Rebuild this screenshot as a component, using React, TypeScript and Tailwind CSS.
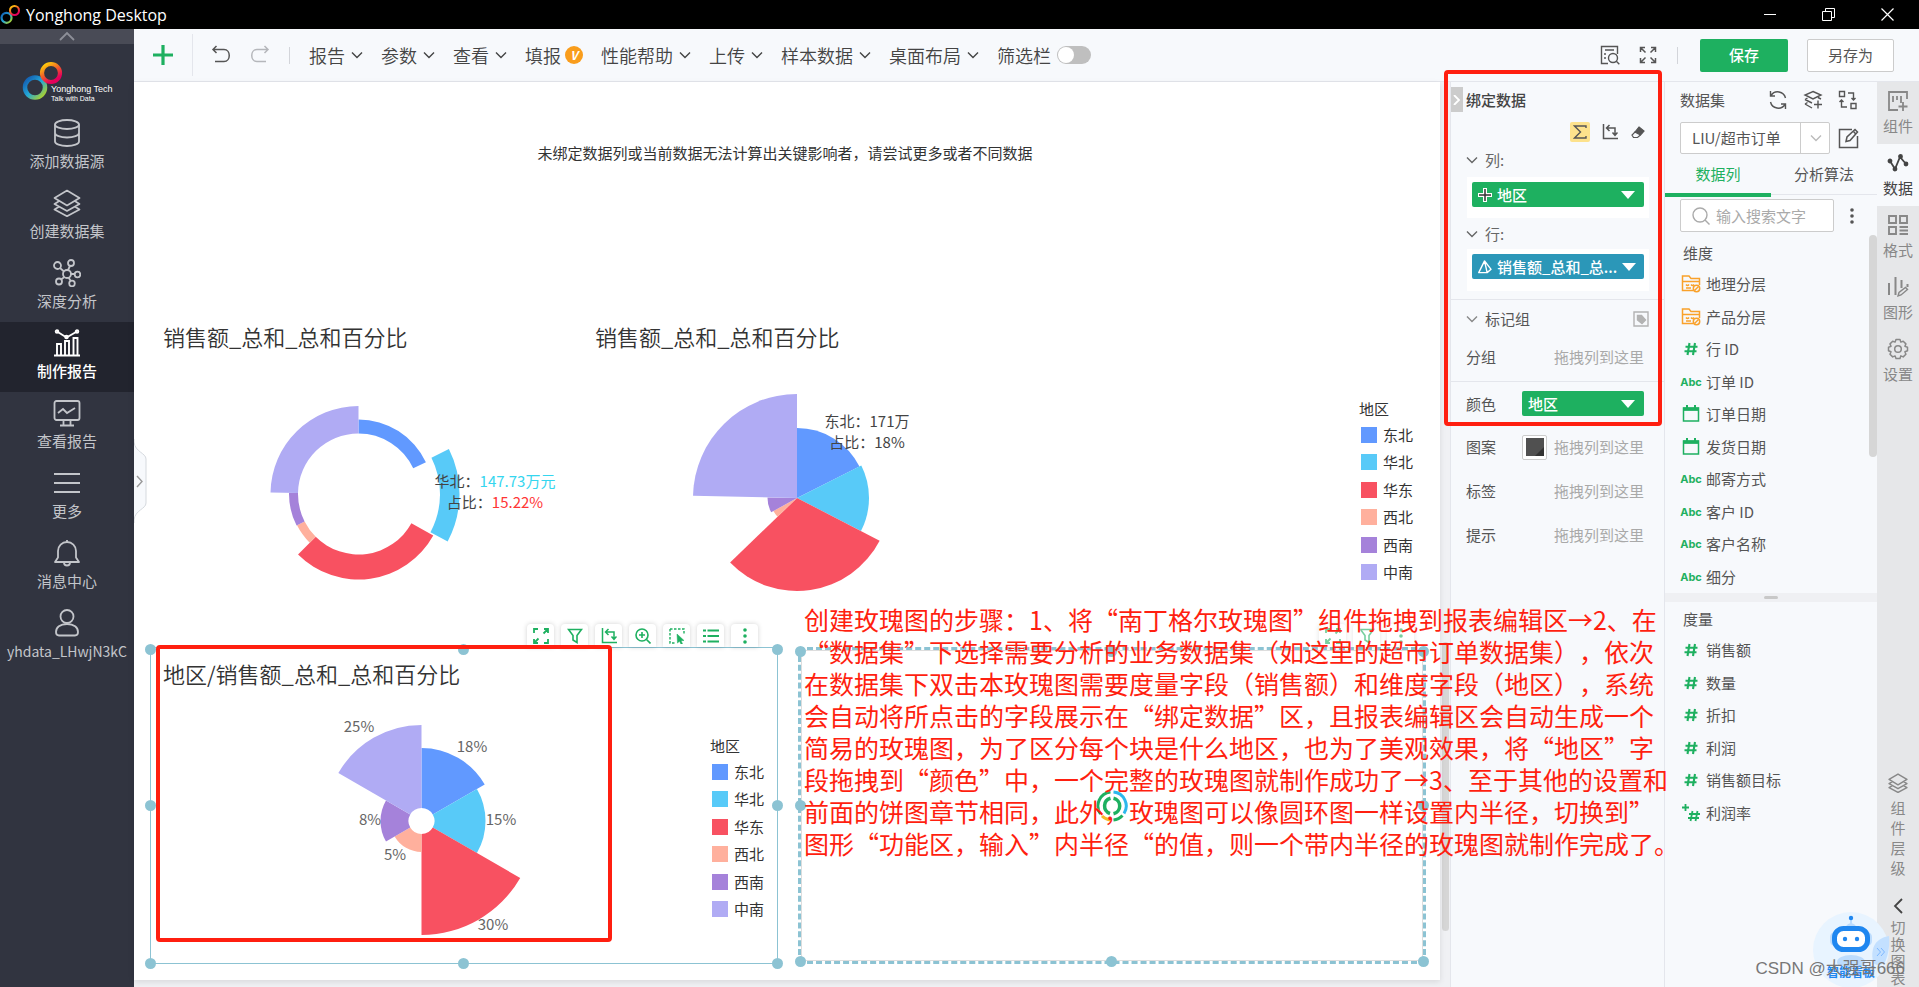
import type { ReactNode } from "react";
import clsx from "clsx";

type Slice = { from: number; to: number; inner: number; outer: number; color: string };

const COLORS = {
  dongbei: "#6199ff",
  huabei: "#58caf8",
  huadong: "#f85161",
  xibei: "#ffb09d",
  xinan: "#a582da",
  zhongnan: "#b0abf4",
};

const REGIONS = [
  { name: "东北", color: COLORS.dongbei },
  { name: "华北", color: COLORS.huabei },
  { name: "华东", color: COLORS.huadong },
  { name: "西北", color: COLORS.xibei },
  { name: "西南", color: COLORS.xinan },
  { name: "中南", color: COLORS.zhongnan },
];

const STEPS = [
  "创建玫瑰图的步骤：1、将“南丁格尔玫瑰图”组件拖拽到报表编辑区→2、在",
  "“数据集”下选择需要分析的业务数据集（如这里的超市订单数据集），依次",
  "在数据集下双击本玫瑰图需要度量字段（销售额）和维度字段（地区），系统",
  "会自动将所点击的字段展示在“绑定数据”区，且报表编辑区会自动生成一个",
  "简易的玫瑰图，为了区分每个块是什么地区，也为了美观效果，将“地区”字",
  "段拖拽到“颜色”中，一个完整的玫瑰图就制作成功了→3、至于其他的设置和",
  "前面的饼图章节相同，此外，玫瑰图可以像圆环图一样设置内半径，切换到”",
  "图形“功能区，输入”内半径“的值，则一个带内半径的玫瑰图就制作完成了。",
];

// --- icons ---

function Icon({ size = 20, box = 20, sw = 1.4, className, children }: { size?: number; box?: number; sw?: number; className?: string; children: ReactNode }) {
  return (
    <svg width={size} height={size} viewBox={`0 0 ${box} ${box}`} fill="none" stroke="currentColor" strokeWidth={sw} className={clsx("shrink-0", className)} aria-hidden="true">
      {children}
    </svg>
  );
}

const Chevron = ({ className }: { className?: string }) => (
  <Icon size={12} box={12} className={className}><path d="M1 3.500 6 8.500 11 3.500" /></Icon>
);

const Caret = () => (
  <svg width="14" height="8" viewBox="0 0 14 8" className="shrink-0" aria-hidden="true"><path d="M0 0h14L7 8z" fill="#fff" /></svg>
);

// four arrows pointing at the corners, not joined in the middle
const ExpandIcon = () => (
  <Icon size={18} box={18} sw={1.5}>
    <path d="M1.500 6V1.500H6M1.500 1.500l5 5M12 1.500h4.500V6M16.500 1.500l-5 5M1.500 12v4.500H6M1.500 16.500l5-5M16.500 12v4.500H12M16.500 16.500l-5-5" />
  </Icon>
);

const FullIcon = () => (
  <Icon size={16} box={16} sw={1.8}>
    <path d="M1 5V1h4M11 1h4v4M15 1l-4.500 4.500M1 11v4h4M1 15l4.500-4.500M15 11v4h-4" />
  </Icon>
);

const FilterIcon = () => (
  <Icon size={16} box={16} sw={1.6}><path d="M1.500 1.500h13L10 7.500V14.500L6 12V7.500z" /></Icon>
);

const AxisIcon = () => (
  <Icon size={16} box={16} sw={1.5}><path d="M1.500 0v14.500H16M4.500 4h8.500v7M7.500 1 4.500 4l3 3M10.500 8.500 13 11.300l2.500-2.800" /></Icon>
);

const DotsIcon = () => (
  <svg width="16" height="16" viewBox="0 0 16 16" fill="currentColor" aria-hidden="true">
    <circle cx="8" cy="2" r="1.800" /><circle cx="8" cy="8" r="1.800" /><circle cx="8" cy="14" r="1.800" />
  </svg>
);

const LayersIcon = ({ size = 28 }: { size?: number }) => (
  <Icon size={size} box={28} sw={size > 24 ? 1.7 : 2}>
    <path d="M14 1.500 26.500 9 14 16.500 1.500 9zM5.500 12.500l-4 2.500L14 22l12.500-7-4-2.500M5.500 18l-4 2.500L14 27.200l12.500-6.700-4-2.500" strokeLinejoin="round" />
  </Icon>
);

const NAV = [
  { label: "添加数据源", icon: <Icon size={28} box={28} sw={1.8}><ellipse cx="14" cy="5.500" rx="12" ry="4.500" /><path d="M2 5.500v17c0 2.500 5.400 4.500 12 4.500s12-2 12-4.500v-17M2 14c0 2.500 5.400 4.500 12 4.500s12-2 12-4.500" /></Icon> },
  { label: "创建数据集", icon: <LayersIcon /> },
  { label: "深度分析", icon: <Icon size={28} box={28} sw={1.8}><circle cx="14" cy="15" r="4" /><circle cx="4.500" cy="6.500" r="3.500" /><circle cx="18" cy="4" r="3" /><circle cx="24.500" cy="15.500" r="2.800" /><circle cx="6" cy="22.500" r="3" /><circle cx="19" cy="24.500" r="2.800" /><path d="m7 9 4 3.500M17 7l-2 4M18 15h3.700M11.500 18 8 20.500M15.500 18.500l2.300 3.500" /></Icon> },
  { label: "制作报告", active: true, icon: <Icon size={28} box={28} sw={1.9}><path d="M1 26.500h26M4 26V15h4v11M12 26V12h4v14M20.500 26V9h4v17M4 2.500l9.500 6L24 2.500" /><circle cx="4" cy="2.500" r="1.300" /><circle cx="13.500" cy="8" r="1.300" /><circle cx="24" cy="2.500" r="1.300" /></Icon> },
  { label: "查看报告", icon: <Icon size={28} box={28} sw={1.8}><rect x="1.500" y="2" width="25" height="19" rx="2" /><path d="m5 14 5-4 4 4 8-5M10.500 21v5M17.500 21v5M7 26.500h14" /></Icon> },
  { label: "更多", icon: <Icon size={28} box={28} sw={1.8}><path d="M1 5h26M1 14h26M1 23h26" /></Icon> },
  { label: "消息中心", icon: <Icon size={28} box={28} sw={1.8}><path d="M2 23h24l-3-4.500V12c0-5-4-9-9-9s-9 4-9 9v6.500zM14 3V1M11 23.500c0 4 6 4 6 0" strokeLinejoin="round" /></Icon> },
  { label: "yhdata_LHwjN3kC", small: true, icon: <Icon size={28} box={28} sw={1.8}><ellipse cx="14" cy="7.500" rx="6.500" ry="6.500" /><path d="M6 26.500h16c2 0 3-1.500 3-3.500 0-4.500-4-8-11-8S3 18.500 3 23c0 2 1 3.500 3 3.500z" /></Icon> },
];

const TABS = [
  { label: "组件", icon: <Icon size={22} box={22} sw={1.8}><path d="M20 9V2H2v18h9M6 6v6M10 6v4M14 6v7M16 12v9M11.500 16.500h9" /></Icon> },
  { label: "数据", active: true, icon: <Icon size={22} box={22} sw={1.8}><path d="m3 9 5 8 5-12 6 7" /><g fill="currentColor"><circle cx="3" cy="9" r="1.500" /><circle cx="8" cy="17" r="1.500" /><circle cx="13.500" cy="4.500" r="1.500" /><circle cx="19" cy="12" r="1.500" /></g></Icon> },
  { label: "格式", icon: <Icon size={22} box={22} sw={1.9}><path d="M2 2h7v7H2zM13 2h7v7h-7zM2 13h7v7H2zM12.500 13H21M12.500 16.500H21M12.500 20H21" /></Icon> },
  { label: "图形", icon: <Icon size={22} box={22} sw={2}><path d="M2 7v12M8.500 1v18M14.500 4v8M20.500 8v3" /><path d="m11 20 1-3.500 6.500-5 2 2-6.500 5.500z" strokeWidth="1.400" /></Icon> },
  { label: "设置", icon: <Icon size={22} box={22} sw={1.5}><circle cx="11" cy="11" r="3.300" /><path d="m9 1.500h4l.8 2.600 2.400-.9 2.700 2.700-1 2.500 2.600.9v3.400l-2.600 1 1 2.500-2.700 2.700-2.400-1-.8 2.600H9l-.9-2.600-2.400 1L3 16.200l1-2.500-2.500-1V9.300L4 8.400 3 5.900l2.700-2.700 2.400.9z" strokeLinejoin="round" /></Icon> },
];

const MENUS = [
  { label: "报告" },
  { label: "参数" },
  { label: "查看" },
  { label: "填报", vip: true },
  { label: "性能帮助" },
  { label: "上传" },
  { label: "样本数据" },
  { label: "桌面布局" },
];

const DIMENSIONS = [
  { kind: "folder", label: "地理分层" },
  { kind: "folder", label: "产品分层" },
  { kind: "number", label: "行 ID" },
  { kind: "text", label: "订单 ID" },
  { kind: "date", label: "订单日期" },
  { kind: "date", label: "发货日期" },
  { kind: "text", label: "邮寄方式" },
  { kind: "text", label: "客户 ID" },
  { kind: "text", label: "客户名称" },
  { kind: "text", label: "细分" },
];

const MEASURES = [
  { kind: "number", label: "销售额" },
  { kind: "number", label: "数量" },
  { kind: "number", label: "折扣" },
  { kind: "number", label: "利润" },
  { kind: "number", label: "销售额目标" },
  { kind: "calc", label: "利润率" },
];

function FieldIcon({ kind }: { kind: string }) {
  switch (kind) {
    case "folder":
      return (
        <Icon size={20} box={20} sw={1.5} className="text-[#f9a12a]">
          <path d="M12 16.500H1.500V2H8l2 2.500h8.500V11M1.500 7.500h17M5 10.500c1 1.300 2 1.300 3 0M10 10.500c1 1.300 2 1.300 3 0M5 14h5" />
          <circle cx="15.500" cy="14.500" r="3.200" /><path d="m13.500 16.500 4-4" />
        </Icon>
      );
    case "date":
      return (
        <Icon size={18} box={18} sw={1.5} className="text-[#1eb060]">
          <path d="M1.500 3h15v13h-15zM1.500 5h15" /><path d="M1 4h16" strokeWidth="3" /><path d="M5 0v3M13 0v3" strokeWidth="2" />
        </Icon>
      );
    case "text":
      return <span className="text-[11px] font-bold text-[#1eb060] [font-family:Inter,sans-serif]">Abc</span>;
    case "calc":
      return (
        <Icon size={18} box={18} sw={1.8} className="text-[#1eb060]">
          <path d="M3.500 0v7M0 3.500h7M10.500 7 8.500 17M15.500 7l-2 10M7 10h11M6 14h11" />
        </Icon>
      );
    default:
      return (
        <Icon size={14} box={14} sw={2.1} className="text-[#1eb060]">
          <path d="M5.500 1 3.500 13M11 1 9 13M1.500 4.700h12M.5 9.300h12" />
        </Icon>
      );
  }
}

// --- charts ---

function arcPath(cx: number, cy: number, { from, to, inner, outer }: Slice) {
  const pt = (r: number, deg: number) => {
    const a = (deg * Math.PI) / 180;
    return `${(cx + r * Math.sin(a)).toFixed(2)} ${(cy - r * Math.cos(a)).toFixed(2)}`;
  };
  const large = to - from > 180 ? 1 : 0;
  return `M${pt(inner, from)}L${pt(outer, from)}A${outer} ${outer} 0 ${large} 1 ${pt(outer, to)}L${pt(inner, to)}A${inner} ${inner} 0 ${large} 0 ${pt(inner, from)}Z`;
}

function RoseChart({ cx, cy, slices, children }: { cx: number; cy: number; slices: Slice[]; children?: ReactNode }) {
  return (
    <svg width="420" height="248" className="block" role="img" aria-label="玫瑰图">
      {slices.map((s) => <path key={s.color} d={arcPath(cx, cy, s)} fill={s.color} />)}
      <g fontSize="15" textAnchor="middle">{children}</g>
    </svg>
  );
}

const RING: Slice[] = [
  { from: 0, to: 64.8, inner: 60.5, outer: 74.5, color: COLORS.dongbei },
  { from: 63.5, to: 118, inner: 81.5, outer: 101, color: COLORS.huabei },
  { from: 119, to: 225, inner: 60.5, outer: 85.5, color: COLORS.huadong },
  { from: 225, to: 243, inner: 60.5, outer: 69, color: COLORS.xibei },
  { from: 243, to: 271, inner: 60.5, outer: 69.5, color: COLORS.xinan },
  { from: 271, to: 360, inner: 60.5, outer: 88, color: COLORS.zhongnan },
];

const PIE: Slice[] = [
  { from: 0, to: 63.2, inner: 0, outer: 70, color: COLORS.dongbei },
  { from: 63.2, to: 117.3, inner: 0, outer: 72, color: COLORS.huabei },
  { from: 117.3, to: 226, inner: 0, outer: 93, color: COLORS.huadong },
  { from: 226, to: 241, inner: 0, outer: 27, color: COLORS.xibei },
  { from: 241, to: 271.2, inner: 0, outer: 29.5, color: COLORS.xinan },
  { from: 271.2, to: 360, inner: 0, outer: 104, color: COLORS.zhongnan },
];

const ROSE: Slice[] = [
  { from: 0, to: 60, inner: 13, outer: 73, color: COLORS.dongbei },
  { from: 60, to: 120, inner: 13, outer: 64, color: COLORS.huabei },
  { from: 120, to: 180, inner: 13, outer: 114, color: COLORS.huadong },
  { from: 180, to: 240, inner: 13, outer: 31, color: COLORS.xibei },
  { from: 240, to: 300, inner: 13, outer: 41, color: COLORS.xinan },
  { from: 300, to: 360, inner: 13, outer: 96, color: COLORS.zhongnan },
];

function Legend() {
  return (
    <div className="w-[67px] shrink-0 text-[15px] leading-6 text-[#333]">
      <div>地区</div>
      <ul className="grid h-[165px] auto-rows-fr">
        {REGIONS.map((r) => (
          <li key={r.name} className="flex items-center gap-[6px] pl-[2px]">
            <span className="size-4" style={{ backgroundColor: r.color }} />
            {r.name}
          </li>
        ))}
      </ul>
    </div>
  );
}

function Handles() {
  const dot = "absolute size-[11px] rounded-full bg-[#8cc3d3]";
  return (
    <>
      <i className={`${dot} -left-[6px] -top-[4px]`} />
      <i className={`${dot} left-1/2 -ml-[6px] -top-[4px]`} />
      <i className={`${dot} -right-[6px] -top-[4px]`} />
      <i className={`${dot} -left-[6px] top-1/2 -mt-[6px]`} />
      <i className={`${dot} -right-[6px] top-1/2 -mt-[6px]`} />
      <i className={`${dot} -bottom-[6px] -left-[6px]`} />
      <i className={`${dot} -bottom-[6px] left-1/2 -ml-[6px]`} />
      <i className={`${dot} -bottom-[6px] -right-[6px]`} />
    </>
  );
}

function FloatButton({ label, children }: { label: string; children: ReactNode }) {
  return (
    <button aria-label={label} className="flex h-[23px] w-[27px] items-center justify-center rounded-t-[4px] bg-white text-[#1eb060] shadow-[0_0_5px_rgba(0,0,0,0.18)]">
      {children}
    </button>
  );
}

function Spinner() {
  return (
    <svg width="32" height="32" viewBox="0 0 32 32" fill="none" strokeWidth="3" aria-label="加载中">
      <circle cx="16" cy="16" r="15.500" fill="#fff" />
      <path d="M17.500 2A14 14 0 0 1 28 23.500" stroke="#2cb8ec" />
      <path d="M26.500 25.500A14 14 0 0 1 17.500 30" stroke="#1eb060" />
      <path d="M14.500 30A14 14 0 0 1 6 26" stroke="#f7ba2a" />
      <path d="M4.500 24A14 14 0 0 1 14.500 2" stroke="#1eb060" />
      <path d="M17.500 8.200a8 8 0 0 1 0 15.600M14 23.500a8 8 0 0 1 .5-15.300" stroke="#1eb060" strokeWidth="3.500" />
    </svg>
  );
}

// --- shell ---

function Rings({ className }: { className?: string }) {
  return (
    <svg viewBox="0 0 42 40" className={className} fill="none" aria-hidden="true">
      <defs>
        <linearGradient id="cool" x1="0" y1="0" x2="1" y2="1">
          <stop offset="0.100" stopColor="#1565b5" /><stop offset="0.500" stopColor="#23a7d8" /><stop offset="0.900" stopColor="#a2cf3a" />
        </linearGradient>
        <linearGradient id="warm" x1="0" y1="0" x2="0.600" y2="1">
          <stop offset="0.100" stopColor="#fdc70c" /><stop offset="0.550" stopColor="#f1592a" /><stop offset="0.950" stopColor="#e5005b" />
        </linearGradient>
      </defs>
      <circle cx="13" cy="26.500" r="10" stroke="url(#cool)" strokeWidth="4.500" />
      <circle cx="29" cy="12" r="9" stroke="url(#warm)" strokeWidth="4.200" />
    </svg>
  );
}

function TitleBar() {
  return (
    <header className="flex h-[29px] shrink-0 items-center justify-between bg-black text-white">
      <div className="flex items-center gap-[5px]">
        <Rings className="h-[21px] w-[21px]" />
        <span className="text-base leading-6 [font-family:'Open_Sans',sans-serif]">Yonghong Desktop</span>
      </div>
      <div className="flex items-center gap-[46px] pr-[25px]">
        <button aria-label="最小化"><Icon size={12} box={12} sw={1}><path d="M0 5.500h12" /></Icon></button>
        <button aria-label="还原"><Icon size={13} box={13} sw={1}><path d="M.5 3.500h9v9h-9zM3.500 3.500v-3h9v9h-3" /></Icon></button>
        <button aria-label="关闭"><Icon size={13} box={13} sw={1.2}><path d="m.5.5 12 12M12.500.5l-12 12" /></Icon></button>
      </div>
    </header>
  );
}

function Sidebar() {
  return (
    <aside className="flex w-[134px] shrink-0 flex-col bg-[#313440] text-[#c3c5ca]">
      <button aria-label="收起" className="flex h-[15px] items-center justify-center bg-[#494b56] text-[#8d8f98]">
        <Icon size={16} box={16} sw={1.8}><path d="m1 11 7-7 7 7" /></Icon>
      </button>
      <div className="flex h-[68px] items-start pl-[22px] pt-[17px]">
        <Rings className="h-10 w-[42px] shrink-0" />
        <div className="-ml-[13px] mt-[23px] whitespace-nowrap text-white [font-family:'Liberation_Sans',sans-serif]">
          <p className="text-[9px] leading-[11px]">Yonghong Tech</p>
          <p className="text-[7px] leading-[8px]">Talk with Data</p>
        </div>
      </div>
      <nav>
        {NAV.map((n) => (
          <a
            key={n.label}
            href="#"
            className={clsx("flex h-[70px] flex-col items-center gap-1 pt-[7px] leading-5", n.small ? "text-sm" : "text-[15px]", n.active && "bg-[#22242e] font-medium text-white")}
          >
            {n.icon}
            {n.label}
          </a>
        ))}
      </nav>
    </aside>
  );
}

function Toolbar() {
  return (
    <div className="flex h-[53px] shrink-0 items-center border-b border-[#e4e6ec] bg-[#f7f9fc] text-lg text-[#555]">
      <button aria-label="新建" className="flex h-[42px] w-[59px] items-center justify-center border-r border-[#e4e6ec] text-[#1eb060]">
        <Icon size={20} box={20} sw={3.2}><path d="M10 0v20M0 10h20" /></Icon>
      </button>
      <button aria-label="撤销" className="ml-[18px]"><Icon sw={1.5}><path d="M5.500 1 2 4.500 5.500 8M2 4.500h11c7 0 7 12 0 12H4" /></Icon></button>
      <button aria-label="重做" className="ml-[19px] text-[#b5b7bb]"><Icon sw={1.5}><path d="M14.500 1 18 4.500 14.500 8M18 4.500H7c-7 0-7 12 0 12h9" /></Icon></button>
      <span className="ml-[19px] h-[17px] w-px bg-[#d3d5da]" />
      <nav className="ml-[19px] flex items-center gap-[18px] whitespace-nowrap font-[350] text-[#444]">
        {MENUS.map((m) => (
          <button key={m.label} className="flex items-center gap-[6px]">
            {m.label}
            {m.vip ? (
              <span className="-ml-[2px] flex size-[18px] items-center justify-center rounded-full bg-[#f99d1c] text-xs font-bold italic text-white">V</span>
            ) : (
              <Chevron />
            )}
          </button>
        ))}
        <label className="flex items-center gap-[6px]">
          筛选栏
          <input type="checkbox" role="switch" className="h-[18px] w-[34px] appearance-none rounded-full bg-[#bfbfbf] p-px before:block before:size-4 before:rounded-full before:bg-white" />
        </label>
      </nav>
      <div className="ml-auto flex items-center pr-[25px] text-[15px]">
        <button aria-label="预览"><Icon><path d="M8 18.500H1.500v-17h16V9M5 5h9M4 9h2M4 13h2" /><circle cx="13" cy="13" r="4.500" /><path d="m16.300 16.300 3 3" /></Icon></button>
        <button aria-label="全屏" className="ml-[19px]"><ExpandIcon /></button>
        <span className="ml-5 h-[17px] w-px bg-[#d3d5da]" />
        <button className="ml-[22px] h-[33px] w-[88px] rounded-[2px] bg-[#1eb060] font-medium text-white">保存</button>
        <button className="ml-[19px] h-[33px] w-[87px] rounded-[2px] border border-[#ccc] bg-white">另存为</button>
      </div>
    </div>
  );
}

function Report() {
  const title = "text-[22px] font-[350] leading-[38px] text-[#333]";
  return (
    <div className="relative flex min-w-0 flex-1 flex-col bg-[#f0f1f4]">
      <div className="h-[898px] bg-white pt-[59px] shadow-[0_2px_6px_rgba(0,0,0,0.1)]">
        <p className="pr-1 text-center text-[15px] leading-6 text-[#333]">未绑定数据列或当前数据无法计算出关键影响者，请尝试更多或者不同数据</p>

        <div className="mt-[152px] flex h-[308px] pl-[29px] pr-[14px]">
          <section className="w-[432px] shrink-0">
            <h2 className={`${title} mb-[6px]`}>销售额_总和_总和百分比</h2>
            <RoseChart cx={195.5} cy={133} slices={RING}>
              <text x="332" y="126" fill="#444">华北：<tspan fill="#35d6ef">147.73万元</tspan></text>
              <text x="332" y="147" fill="#444">占比：<tspan fill="#ff3535">15.22%</tspan></text>
            </RoseChart>
          </section>
          <section className="flex flex-1 justify-between">
            <div>
              <h2 className={`${title} mb-[6px]`}>销售额_总和_总和百分比</h2>
              <RoseChart cx={202} cy={137} slices={PIE}>
                <text x="272" y="66" fill="#444">东北：171万</text>
                <text x="272" y="87" fill="#444">占比：18%</text>
              </RoseChart>
            </div>
            <div className="pt-[80px]"><Legend /></div>
          </section>
        </div>

        <div className="mt-[22px] grid h-[317px] grid-cols-2 gap-5 pl-4 pr-[14px]">
          <section className="relative flex justify-between border border-[#8cc3d3] pl-[12px]">
            <div>
              <h2 className={`${title} mb-[3px] pt-[6px]`}>地区/销售额_总和_总和百分比</h2>
              <RoseChart cx={258.5} cy={126} slices={ROSE}>
                <g fill="#666">
                  <text x="196" y="37">25%</text>
                  <text x="309" y="57">18%</text>
                  <text x="338" y="130">15%</text>
                  <text x="207" y="130">8%</text>
                  <text x="232" y="165">5%</text>
                  <text x="330" y="235">30%</text>
                </g>
              </RoseChart>
            </div>
            <div className="pt-[86px]"><Legend /></div>
            <Handles />
            <div className="absolute -top-[24px] right-[19px] flex gap-[7px]">
              <FloatButton label="放大"><FullIcon /></FloatButton>
              <FloatButton label="过滤"><FilterIcon /></FloatButton>
              <FloatButton label="转置"><AxisIcon /></FloatButton>
              <FloatButton label="缩放"><Icon size={16} box={16} sw={1.6}><circle cx="7" cy="7" r="6" /><path d="M7 4v6M4 7h6M11.500 11.500l4 4" /></Icon></FloatButton>
              <FloatButton label="选择"><Icon size={16} box={16} sw={1.4}><path d="M1 1h14v6M1 1v14h6" strokeDasharray="2.500 1.500" /><path d="m8 6 7 6.500-3 .2 1.500 3-1.500.5-1.500-3L8.500 15z" fill="currentColor" strokeWidth="0.500" /></Icon></FloatButton>
              <FloatButton label="列表"><Icon size={16} box={16} sw={2}><path d="M0 2.500h3M4.500 2.500H16M0 8h3M4.500 8H16M0 13.500h3M4.500 13.500H16" /></Icon></FloatButton>
              <FloatButton label="更多"><DotsIcon /></FloatButton>
            </div>
            <div className="pointer-events-none absolute -top-[3px] left-[5px] h-[297px] w-[456px] rounded-[4px] border-4 border-[#ff1f10]" />
          </section>

          <section className="relative border-[3px] border-dashed border-[#8cc3d3]">
            <div className="flex h-full items-center justify-center border border-[#ddd]"><Spinner /></div>
            <Handles />
            <div className="absolute -top-[26px] right-[9px] flex gap-[7px] opacity-60">
              <FloatButton label="放大"><FullIcon /></FloatButton>
              <FloatButton label="过滤"><FilterIcon /></FloatButton>
              <FloatButton label="更多"><DotsIcon /></FloatButton>
            </div>
          </section>
        </div>
      </div>

      {/* drawer handle on the left edge */}
      <button aria-label="展开目录" className="absolute left-0 top-[357px] text-[#999]">
        <svg width="14" height="84" viewBox="0 0 14 84" fill="none">
          <path d="M0 0v3c1 10 12 11 12 17v44c0 6-11 7-12 17v3" fill="#f7f9fc" stroke="#d5d9de" />
          <path d="m3 37 5 5.500L3 48" stroke="currentColor" strokeWidth="1.400" />
        </svg>
      </button>

      <div className="pointer-events-none absolute left-[670px] top-[521px] z-20 whitespace-nowrap text-[25px] leading-8 text-[#ff1f10] [text-spacing-trim:space-all]">
        {STEPS.map((line) => <p key={line}>{line}</p>)}
      </div>
    </div>
  );
}

function DropHint() {
  return <span className="ml-auto text-[#a9a9a9]">拖拽列到这里</span>;
}

function BindPanel() {
  const chip = "flex h-[25px] items-center rounded-[2px] pl-[6px] pr-[9px] font-medium text-white";
  const row = "flex h-[44px] items-center pl-[15px] pr-[20px]";
  return (
    <section className="relative w-[215px] shrink-0 border-x border-[#e4e6ec] bg-[#f7f9fc] text-[15px] leading-6 text-[#555]">
      <button aria-label="折叠" className="absolute left-0 top-[5px] flex h-[25px] w-3 items-center justify-center bg-[#ccc] text-white">
        <Icon size={10} box={10} sw={1.8}><path d="m2 0 5 5-5 5" /></Icon>
      </button>
      <h3 className="pl-[15px] pt-[6px] font-medium text-[#444]">绑定数据</h3>
      <div className="mt-[10px] flex h-5 items-center justify-end pr-[19px]">
        <button aria-label="聚合" className="flex size-5 items-center justify-center rounded-[2px] bg-[#fde28c]">
          <Icon size={14} box={14}><path d="M13 3V1H1.500l6 6-6 6H13v-2" /></Icon>
        </button>
        <button aria-label="转置" className="ml-3"><AxisIcon /></button>
        <button aria-label="清除" className="ml-[13px]">
          <Icon size={14} box={14} sw={1.2}><path d="m8 2 5 4-3.500 4-5.500-3z" fill="currentColor" /><path d="M4.500 6.500 1 10l1.500 2.500h4l3-2.500" /></Icon>
        </button>
      </div>
      <div className="mt-[6px] flex items-center gap-[7px] pl-[15px] text-[#666]"><Chevron />列:</div>
      <div className="ml-4 mr-[15px] mt-[5px] h-[41px] bg-white p-[5px]">
        <button className={`${chip} w-full gap-[5px] bg-[#1eb060]`}>
          <svg width="14" height="14" viewBox="0 0 14 14" aria-hidden="true"><path d="M7 0v14M0 7h14" stroke="#fff" strokeWidth="4" /><path d="M7 1v12M1 7h12" stroke="#333" strokeWidth="1.500" /></svg>
          地区
          <span className="ml-auto"><Caret /></span>
        </button>
      </div>
      <div className="mt-[4px] flex items-center gap-[7px] pl-[15px] text-[#666]"><Chevron />行:</div>
      <div className="ml-4 mr-[15px] mt-[3px] h-[42px] bg-white p-[5px]">
        <button className={`${chip} w-full gap-[5px] whitespace-nowrap bg-[#2b97b8]`}>
          <Icon size={14} box={15} sw={1.5}><path d="M7 1 .8 13.500h9L14 10zM7 1l2.800 12.500" strokeLinejoin="round" /></Icon>
          销售额_总和_总...
          <span className="ml-auto"><Caret /></span>
        </button>
      </div>
      <div className="mt-[8px] flex h-[38px] items-center gap-[7px] border-t border-[#e4e6ec] pl-[15px] pr-[15px]">
        <Chevron className="text-[#888]" />标记组
        <button aria-label="标记" className="ml-auto text-[#b3b3b3]">
          <Icon size={16} box={16}><path d="M1 1h14v14H1z" /><path d="M4.500 4.500h4l4 4.500-3.500 3.500L4.500 9z" fill="currentColor" /></Icon>
        </button>
      </div>
      <div className={`${row} pb-1`}>分组<DropHint /></div>
      <div className={`${row} border-t border-[#e4e6ec]`}>
        颜色
        <button className={`${chip} ml-auto w-[122px] justify-between bg-[#1eb060]`}>地区<Caret /></button>
      </div>
      {["图案", "标签", "提示"].map((name) => (
        <div key={name} className={row}>
          {name}
          {name === "图案" && (
            <button aria-label="选择图案" className="ml-[26px] flex size-[25px] items-center justify-center rounded-[2px] border border-[#ccc] bg-white">
              <svg width="18" height="18" aria-hidden="true"><path d="M0 0h18v18H0z" fill="#505050" /><path d="M18 9v9H9z" fill="#333" /></svg>
            </button>
          )}
          <DropHint />
        </div>
      ))}
      <div className="pointer-events-none absolute -left-[7px] -top-[12px] z-10 h-[356px] w-[218px] rounded-[4px] border-4 border-[#ff1f10]" />
    </section>
  );
}

function FieldList({ title, items, className }: { title: string; items: { kind: string; label: string }[]; className: string }) {
  return (
    <div className="pl-[16px]">
      <h4 className="pl-[2px] leading-[30px] text-[#555]">{title}</h4>
      <ul className={clsx("grid auto-rows-fr", className)}>
        {items.map((f) => (
          <li key={f.label} className="flex items-center gap-[5px]">
            <span className="flex w-5 justify-center"><FieldIcon kind={f.kind} /></span>
            {f.label}
          </li>
        ))}
      </ul>
    </div>
  );
}

function DataPanel() {
  return (
    <section className="relative flex w-[212px] shrink-0 flex-col bg-[#f7f9fc] text-[15px] leading-6 text-[#555]">
      <div className="flex items-center pl-[15px] pr-[19px] pt-[6px]">
        <h3 className="mr-auto">数据集</h3>
        <div className="flex gap-[15px]">
          <button aria-label="刷新"><Icon><path d="M17.500 8A8 8 0 0 0 3 5.500M2.500 12A8 8 0 0 0 17 14.500M2.500 1v5H7M17.500 19v-5H13" /></Icon></button>
          <button aria-label="新增数据集"><Icon><path d="M10 1.500 18 5l-8 4-8-4zM2 9.500 4.500 8M2 9.500l7 3.500M18 9l-3-1.500M2 14l2.500-1.500M2 14l7 4M15 10.500v8M11 14.500h8" /></Icon></button>
          <button aria-label="替换数据集"><Icon><path d="M1.500 1.500h5v5h-5zM13 13.500h5v5h-5zM10 3h5.500v7M13.500 8l2 2 2-2M9 17H3.500v-7M1.500 12l2-2 2 2" /></Icon></button>
        </div>
      </div>
      <div className="mt-[10px] flex items-center gap-2 pl-[15px]">
        <div className="relative">
          <select aria-label="选择数据集" className="block h-8 w-[150px] appearance-none rounded-[2px] border border-[#ccc] bg-white pl-[11px] pr-[30px]">
            <option>LIU/超市订单</option>
          </select>
          <span className="pointer-events-none absolute inset-y-0 right-0 flex w-[30px] items-center justify-center border-l border-[#ccc] text-[#bbb]"><Chevron /></span>
        </div>
        <button aria-label="编辑"><Icon size={21} box={21} sw={1.5}><path d="M14 1.500H1.500v18h18V8" /><path d="M8 13.500 9 9l8-7.500 2.500 2.500-7.500 8.500z" /><path d="m15.500 3.500 2.300 2.500" /></Icon></button>
      </div>
      <div role="tablist" className="mt-2 grid h-[33px] grid-cols-2 border-b border-[#e4e6ec]">
        <button role="tab" aria-selected="true" className="-mb-px border-b-4 border-[#1eb060] pb-[7px] text-[#1eb060]">数据列</button>
        <button role="tab" aria-selected="false" className="-mb-px border-b-4 border-transparent pb-[7px]">分析算法</button>
      </div>
      <div className="mt-[4px] flex items-center pl-[15px]">
        <label className="flex h-[33px] w-[154px] items-center gap-[6px] rounded-[2px] border border-[#ccc] bg-white pl-[11px] text-[#aaa]">
          <Icon size={18} box={18}><circle cx="8" cy="8" r="7" /><path d="m13 13 4.500 4.500" /></Icon>
          <input aria-label="搜索" placeholder="输入搜索文字" className="w-[100px] bg-transparent placeholder:text-[#aaa]" />
        </label>
        <button aria-label="更多" className="ml-[10px]"><DotsIcon /></button>
      </div>
      <div className="mt-[6px] h-[355px] overflow-hidden">
        <FieldList title="维度" items={DIMENSIONS} className="h-[325px]" />
      </div>
      <div className="flex h-[9px] items-center justify-center bg-[#eff0f3]"><span className="h-[3px] w-[14px] rounded-full bg-[#c8c8c8]" /></div>
      <div className="pt-[2px]">
        <FieldList title="度量" items={MEASURES} className="h-[195px]" />
      </div>
      <span className="absolute right-0 top-[153px] h-[222px] w-2 rounded-full bg-[#d6d6d6]" />
    </section>
  );
}

function Rail() {
  return (
    <aside className="flex w-[42px] shrink-0 flex-col items-center bg-[#e6e7e9] text-[15px] text-[#888]">
      {TABS.map((t) => (
        <button key={t.label} className={clsx("flex h-[62px] w-full shrink-0 flex-col items-center gap-[4px] pt-2 leading-5", t.active && "bg-[#f7f9fc] text-[#444]")}>
          {t.icon}
          {t.label}
        </button>
      ))}
      <button className="mt-[381px] flex w-4 shrink-0 flex-col items-center gap-[5px] leading-5">
        <LayersIcon size={20} />
        <span>组件层级</span>
      </button>
      <button className="mt-[20px] flex w-4 shrink-0 flex-col items-center gap-[4px] leading-[17px]">
        <Icon size={16} box={16} sw={1.8} className="text-[#444]"><path d="M12 1 5 8l7 7" /></Icon>
        <span>切换图表</span>
      </button>
    </aside>
  );
}

function Assistant() {
  return (
    <button className="absolute -bottom-px right-[30px] z-20 flex size-[76px] flex-col items-center rounded-full bg-[#e8f4ff]">
      <svg width="76" height="52" viewBox="0 0 76 52" className="shrink-0 overflow-visible" aria-hidden="true">
        <path d="M76 24c-12 2-19 10-16 26 2 4 8 4 12 0 3-6 5-16 4-26z" fill="#c3e0ff" />
        <path d="m64 36 3.500 4-3.500 4M68 36l3.500 4-3.500 4" stroke="#7db8ff" fill="none" />
        <ellipse cx="38" cy="50" rx="14" ry="7" fill="#bcdcfd" />
        <path d="M33 15c1-5 9-5 10 0z" fill="#bcdcfd" />
        <path d="M38 8v5" stroke="#bcdcfd" strokeWidth="2" />
        <circle cx="38" cy="6" r="2.200" fill="#1f87f0" />
        <rect x="17" y="20" width="42" height="14" rx="5" fill="#bcdcfd" />
        <rect x="21.500" y="16.500" width="33" height="21" rx="9" fill="#fff" stroke="#1f87f0" strokeWidth="5" />
        <circle cx="32" cy="27" r="2.200" fill="#1f87f0" /><circle cx="44" cy="27" r="2.200" fill="#1f87f0" />
      </svg>
      <span className="text-xs font-bold leading-4 text-[#1f87f0]">智能看板</span>
    </button>
  );
}

export default function App() {
  return (
    <div lang="zh-CN" className="relative flex h-screen flex-col overflow-hidden bg-[#f0f1f4] [font-family:'Noto_Sans_CJK_SC',sans-serif]">
      <TitleBar />
      <div className="flex min-h-0 flex-1">
        <Sidebar />
        <div className="flex min-w-0 flex-1 flex-col">
          <Toolbar />
          <div className="flex min-h-0 flex-1">
            <Report />
            <div className="flex w-[10px] shrink-0 justify-center bg-[#f0f1f4]">
              <span className="mt-[560px] h-[289px] w-[7px] rounded-full bg-[#d6d6d6]" />
            </div>
            <BindPanel />
            <DataPanel />
            <Rail />
          </div>
        </div>
      </div>
      <Assistant />
      <p className="pointer-events-none absolute bottom-1 right-[14px] z-30 text-[17px] leading-7 text-[#777] [font-family:'Liberation_Sans','Noto_Sans_CJK_SC',sans-serif]">CSDN @大强哥666</p>
    </div>
  );
}
